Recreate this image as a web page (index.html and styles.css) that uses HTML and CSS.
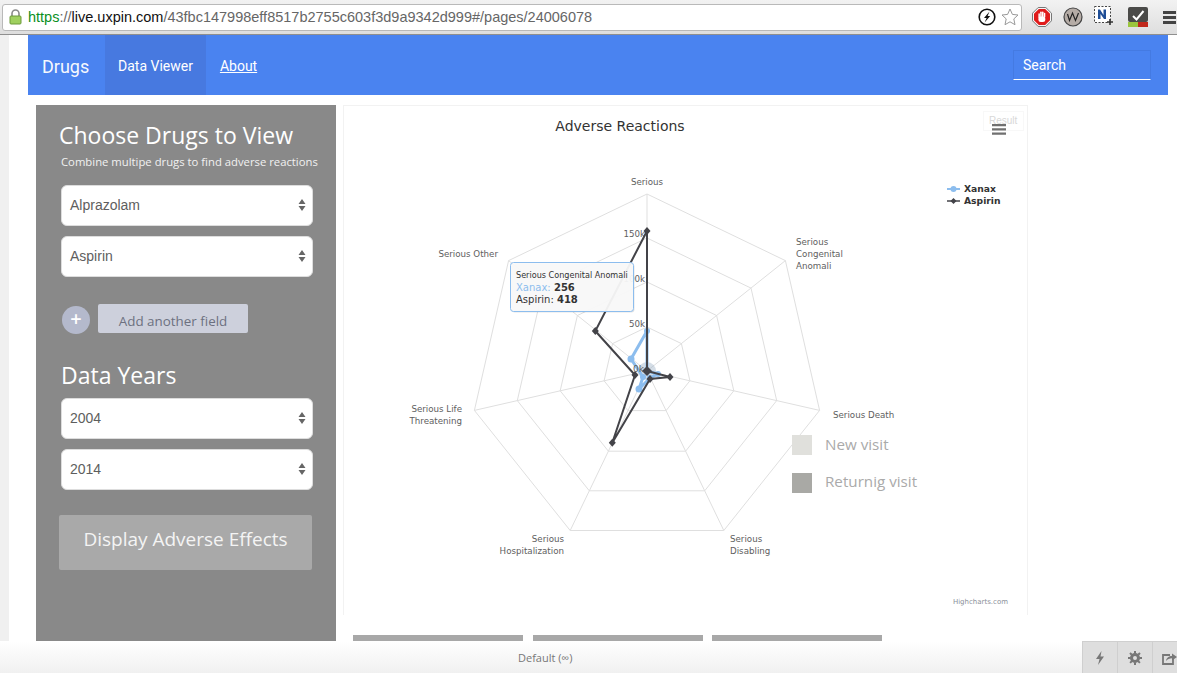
FILE: index.html
```html
<!DOCTYPE html>
<html lang="en">
<head>
    <meta charset="UTF-8">
    <meta name="viewport" content="width=device-width, initial-scale=1.0">
    <title>Drugs</title>
    <link rel="stylesheet" href="styles.css">
</head>
<body>
    <!-- browser toolbar -->
    <div class="toolbar">
        <div class="address">
            <svg class="lock" width="13" height="16" viewBox="0 0 13 16">
                <path d="M3 7V4.500a3.500 3.500 0 0 1 7 0V7" fill="none" stroke="#8a8a8a" stroke-width="1.600"/>
                <rect x="1" y="7" width="11" height="8" rx="1" fill="#9fd05f" stroke="#6c9a3a"/>
            </svg>
            <span class="url"><span class="green">https</span>://<span class="host">live.uxpin.com</span>/43fbc147998eff8517b2755c603f3d9a9342d999#/pages/24006078</span>
            <svg class="addr-icon" width="18" height="18" viewBox="0 0 18 18">
                <circle cx="9" cy="9" r="7.800" fill="#fff" stroke="#111" stroke-width="1.600"/>
                <path d="M11.500 3.500 6 10h2.600l-2 4.600L12.200 8H9.600z" fill="#111"/>
            </svg>
            <svg class="addr-icon" width="18" height="18" viewBox="0 0 18 18">
                <path d="M9 1l2.400 5.400 5.600.6-4.200 3.900 1.200 5.800L9 13.800l-5 2.900 1.200-5.800L1 7l5.600-.6z" fill="#fff" stroke="#999"/>
            </svg>
        </div>
        <div class="extensions">
            <svg width="20" height="20" viewBox="0 0 20 20">
                <path d="M6.200.5h7.600l5.700 5.700v7.600l-5.700 5.700H6.200L.5 13.800V6.200z" fill="#f4f4f4" stroke="#777"/>
                <path d="M6.800 2h6.400L18 6.800v6.400L13.200 18H6.800L2 13.200V6.800z" fill="#e01b1b"/>
                <g fill="#fff">
                    <rect x="6.400" y="6.200" width="1.500" height="5" rx=".7"/>
                    <rect x="8.200" y="4.600" width="1.500" height="6" rx=".7"/>
                    <rect x="10" y="4.600" width="1.500" height="6" rx=".7"/>
                    <rect x="11.800" y="5.800" width="1.500" height="5" rx=".7"/>
                    <rect x="6.400" y="9.500" width="6.900" height="5.500" rx="2.500"/>
                </g>
            </svg>
            <svg width="20" height="20" viewBox="0 0 20 20">
                <circle cx="10" cy="10" r="9" fill="#b5aca6" stroke="#444" stroke-width="1.200"/>
                <path d="M4.500 7l2 6.500 3-7.500 3 7.500 3-7.500" fill="none" stroke="#222" stroke-width="1.200"/>
            </svg>
            <svg width="20" height="22" viewBox="0 0 20 22">
                <rect x=".5" y=".5" width="16" height="16" fill="#fff" stroke="#444" stroke-dasharray="2 1.500"/>
                <path d="M4 13V3.500h2l3.500 5.500V3.500h2.500V13h-2L6.500 8v5z" fill="#1f4e96"/>
                <path d="M16 13v6M13 16h6" stroke="#333" stroke-width="1.600"/>
            </svg>
            <svg class="ext-check" width="20" height="20" viewBox="0 0 20 20">
                <rect width="20" height="15" rx="2" fill="#4a4a48"/>
                <rect y="15" width="10" height="5" fill="#9bc53d"/>
                <rect x="10" y="15" width="10" height="5" fill="#c0281c"/>
                <path d="M5 9l3.500 3.500L15.500 4" fill="none" stroke="#fff" stroke-width="2"/>
            </svg>
            <div class="menu-lines"><i></i><i></i><i></i></div>
        </div>
    </div>

    <div class="page">
        <div class="navbar">
            <a class="brand">Drugs</a>
            <a class="tab active">Data Viewer</a>
            <a class="tab link">About</a>
            <div class="search">Search</div>
        </div>

        <div class="main">
            <div class="sidebar">
                <h1>Choose Drugs to View</h1>
                <p class="hint">Combine multipe drugs to find adverse reactions</p>
                <div class="select"><span>Alprazolam</span><svg class="arrows" width="8" height="14" viewBox="0 0 8 14"><path d="M4 1l3.500 5H.5zM4 13l3.500-5H.5z"/></svg></div>
                <div class="select"><span>Aspirin</span><svg class="arrows" width="8" height="14" viewBox="0 0 8 14"><path d="M4 1l3.500 5H.5zM4 13l3.500-5H.5z"/></svg></div>
                <div class="add-row">
                    <div class="add-circle">+</div>
                    <div class="add-btn">Add another field</div>
                </div>
                <h2>Data Years</h2>
                <div class="select"><span>2004</span><svg class="arrows" width="8" height="14" viewBox="0 0 8 14"><path d="M4 1l3.500 5H.5zM4 13l3.500-5H.5z"/></svg></div>
                <div class="select"><span>2014</span><svg class="arrows" width="8" height="14" viewBox="0 0 8 14"><path d="M4 1l3.500 5H.5zM4 13l3.500-5H.5z"/></svg></div>
                <div class="display-btn">Display Adverse Effects</div>
            </div>

            <div class="chart-col">
                <div class="chart">
                    <svg width="685" height="510" viewBox="343 105 685 510">
                        <!-- rings -->
                        <g fill="none" stroke="#dfdfdf" stroke-width="1">
                            <polygon points="647,194 785.400,260.600 819.600,410.400 723.800,530.500 570.200,530.500 474.400,410.400 508.600,260.600"/>
                            <polygon points="647,238 751,288.100 776.700,400.600 704.700,490.800 589.300,490.800 517.300,400.600 543,288.100"/>
                            <polygon points="647,282 716.600,315.500 733.800,390.800 685.600,451.200 608.400,451.200 560.200,390.800 577.400,315.500"/>
                            <polygon points="647,327 681.400,343.600 689.900,380.800 666.100,410.600 627.900,410.600 604.100,380.800 612.600,343.600"/>
                            <path d="M647 371V194M647 371L785.400 260.600M647 371L819.600 410.400M647 371L723.800 530.500M647 371L570.200 530.500M647 371L474.400 410.400M647 371L508.600 260.600"/>
                        </g>

                        <text class="title" x="620" y="131" text-anchor="middle">Adverse Reactions</text>

                        <g class="axis">
                            <text x="647" y="185" text-anchor="middle">Serious</text>
                            <text x="796" y="245">Serious</text>
                            <text x="796" y="257">Congenital</text>
                            <text x="796" y="269">Anomali</text>
                            <text x="833" y="418">Serious Death</text>
                            <text x="730" y="542">Serious</text>
                            <text x="730" y="554">Disabling</text>
                            <text x="564" y="542" text-anchor="end">Serious</text>
                            <text x="564" y="554" text-anchor="end">Hospitalization</text>
                            <text x="462" y="412" text-anchor="end">Serious Life</text>
                            <text x="462" y="424" text-anchor="end">Threatening</text>
                            <text x="498" y="257" text-anchor="end">Serious Other</text>
                        </g>
                        <g class="axis" text-anchor="end">
                            <text x="645" y="237">150k</text>
                            <text x="645" y="282">100k</text>
                            <text x="645" y="327">50k</text>
                        </g>

                        <!-- Xanax -->
                        <circle cx="647" cy="371" r="9" fill="#9fb4c8" opacity=".45"/>
                        <polyline points="647,331 647,371 658,374 650,378 639,389 643,377 631,359 647,331" fill="none" stroke="#8cbdee" stroke-width="3" stroke-linejoin="round"/>
                        <g fill="#8cbdee">
                            <circle cx="647" cy="331" r="3"/>
                            <circle cx="658" cy="374" r="3"/>
                            <circle cx="650" cy="378" r="3"/>
                            <circle cx="639" cy="389" r="3.500"/>
                            <circle cx="643" cy="377" r="3"/>
                            <circle cx="631" cy="359" r="3.500"/>
                        </g>

                        <!-- Aspirin -->
                        <polyline points="647,231 647,371 670,377 650,379 612.300,442.700 635,375 595.300,331 647,231" fill="none" stroke="#434348" stroke-width="2"/>
                        <g fill="#434348">
                            <path d="M647 227l3.500 4-3.500 4-3.500-4z"/>
                            <path d="M647 366l5 5-5 5-5-5z"/>
                            <path d="M670 373l3.500 4-3.500 4-3.500-4z"/>
                            <path d="M650 375l3.500 4-3.500 4-3.500-4z"/>
                            <path d="M612.300 438.700l3.500 4-3.500 4-3.500-4z"/>
                            <path d="M635 371l3.500 4-3.500 4-3.500-4z"/>
                            <path d="M595.300 327l3.500 4-3.500 4-3.500-4z"/>
                        </g>
                        <text class="axis-zero" x="644" y="372" text-anchor="end">0k</text>

                        <!-- legend -->
                        <path d="M947 189h13" stroke="#8cbdee" stroke-width="2"/>
                        <circle cx="953.500" cy="189" r="3" fill="#8cbdee"/>
                        <path d="M947 201h13" stroke="#434348" stroke-width="1.500"/>
                        <path d="M953.500 198l3 3-3 3-3-3z" fill="#434348"/>
                        <text class="legend" x="964" y="192">Xanax</text>
                        <text class="legend" x="964" y="204">Aspirin</text>

                        <!-- export menu -->
                        <rect x="983.500" y="111.500" width="40" height="19" fill="none" stroke="#f8f8f8"/>
                        <text class="result" x="989" y="124">Result</text>
                        <path d="M992 125.200h14M992 129.300h14M992 133.600h14" stroke="#707070" stroke-width="2.300"/>

                        <!-- visit key -->
                        <rect x="792" y="435" width="20" height="20" fill="#e0e0dc"/>
                        <text class="visit" x="825" y="450">New visit</text>
                        <rect x="792" y="473" width="20" height="20" fill="#a9a9a5"/>
                        <text class="visit" x="825" y="487">Returnig visit</text>

                        <text class="credit" x="1008" y="604" text-anchor="end">Highcharts.com</text>

                        <!-- tooltip -->
                        <rect x="511.500" y="263.500" width="123" height="49" rx="3" fill="#000" opacity=".1"/>
                        <rect x="510.500" y="262.500" width="123" height="49" rx="3" fill="#f9f9f9" fill-opacity=".95" stroke="#8cbdee"/>
                        <text class="tip-head" x="516" y="278">Serious Congenital Anomali</text>
                        <text class="tip" x="516" y="291"><tspan fill="#8cbdee">Xanax:</tspan> <tspan class="tip-num">256</tspan></text>
                        <text class="tip" x="516" y="303">Aspirin: <tspan class="tip-num">418</tspan></text>
                    </svg>
                </div>
                <div class="bars">
                    <div class="bar"></div>
                    <div class="bar"></div>
                    <div class="bar"></div>
                </div>
            </div>
        </div>
    </div>

    <div class="footer">
        <div class="footer-label">Default (∞)</div>
        <div class="footer-btns">
            <div class="footer-btn">
                <svg width="12" height="16" viewBox="0 0 12 16"><path d="M7.500 1L2 9h3.500l-1.500 6 6-8.500H6.500z" fill="#777"/></svg>
            </div>
            <div class="footer-btn">
                <svg width="14" height="14" viewBox="0 0 14 14"><circle cx="7" cy="7" r="3.500" fill="none" stroke="#777" stroke-width="3"/><path d="M7 0v14M0 7h14M2 2l10 10M12 2L2 12" stroke="#777" stroke-width="2" stroke-dasharray="2.500 9 2.500"/></svg>
            </div>
            <div class="footer-btn share">
                <svg width="15" height="14" viewBox="0 0 15 14"><path d="M8 4H1v9h10V8" fill="none" stroke="#777" stroke-width="1.800"/><path d="M4 10c.5-3.500 3-5 6-5V2.500L15 6l-5 3.500V7.300C7.500 7.300 5.500 8.200 4 10z" fill="#777"/></svg>
            </div>
        </div>
    </div>
</body>
</html>
```

FILE: styles.css
```css
html,body{
    margin: 0;
    padding: 0;
    height: 673px;
    overflow: hidden;
    background-color: #fff;
}
body{
    display: flex;
    flex-direction: column;
    font-family: Roboto,"Liberation Sans",sans-serif;
}

/* browser toolbar */
.toolbar{
    height: 35px;
    flex-shrink: 0;
    box-sizing: border-box;
    display: flex;
    align-items: center;
    padding: 0 1px 0 2px;
    background: linear-gradient(#f2f2f2,#dedede);
    border-bottom: 1px solid #8f8f8f;
}
.address{
    width: 1020px;
    height: 27px;
    box-sizing: border-box;
    display: flex;
    align-items: center;
    background-color: #fff;
    border: 1px solid #b9b9b9;
    border-radius: 3px;
    padding-left: 6px;
    padding-right: 2px;
    gap: 5px;
}
.lock{
    margin-right: 1px;
}
.url{
    flex: 1;
    font-family: "Liberation Sans",Arial,sans-serif;
    font-size: 14.500px;
    color: #666;
    white-space: nowrap;
}
.green{
    color: #0a8f1e;
}
.host{
    color: #111;
}
.extensions{
    flex: 1;
    display: flex;
    align-items: center;
    gap: 11px;
    padding-left: 10px;
}
.ext-check{
    margin-left: 3px;
}
.menu-lines{
    margin-left: auto;
}
.menu-lines i{
    display: block;
    width: 13px;
    height: 3px;
    margin: 2px 0;
    background-color: #444;
}

/* page */
.page{
    height: 606px;
    flex-shrink: 0;
    box-sizing: border-box;
    border-left: 9px solid #f0f0f0;
    padding-left: 19px;
    overflow: hidden;
}
.navbar{
    width: 1140px;
    height: 60px;
    display: flex;
    align-items: stretch;
    background-color: #4a83f0;
    color: #fff;
}
.brand{
    width: 77px;
    padding-left: 14px;
    box-sizing: border-box;
    font-size: 18px;
    line-height: 64px;
    opacity: .95;
}
.tab{
    font-size: 14px;
    line-height: 62px;
    padding: 0 13px;
}
.active{
    background-color: #4779e0;
}
.link{
    margin-left: 1px;
    text-decoration: underline;
}
.search{
    margin: 15px 17px 15px auto;
    width: 138px;
    height: 30px;
    box-sizing: border-box;
    padding-left: 9px;
    font-size: 14px;
    line-height: 29px;
    border: 1px solid #447ae2;
    border-bottom: 1px solid #fff;
}
.main{
    display: flex;
    gap: 7px;
    margin-left: 8px;
    padding-top: 10px;
}

/* left panel */
.sidebar{
    width: 300px;
    height: 536px;
    box-sizing: border-box;
    padding: 15px 23px 0 25px;
    background-color: #898989;
    color: #fff;
    font-family: "Open Sans",sans-serif;
}
h1,h2{
    margin: 0 0 2px;
    font-weight: 400;
    font-size: 23px;
    line-height: 30px;
}
h1{
    margin-left: -2px;
}
.hint{
    margin: 0 0 13px;
    font-size: 11.300px;
    line-height: 20px;
    white-space: nowrap;
    color: #f1f1f1;
}
.select{
    height: 41px;
    box-sizing: border-box;
    margin-bottom: 10px;
    padding: 0 6px 2px 8px;
    display: flex;
    align-items: center;
    justify-content: space-between;
    background-color: #fff;
    border: 1px solid #ddd;
    border-radius: 6px;
    font-family: "Liberation Sans",Arial,sans-serif;
    font-size: 14px;
    color: #5e5e5e;
}
.arrows{
    fill: #666;
}
.add-row{
    display: flex;
    align-items: flex-start;
    gap: 8px;
    height: 30px;
    margin: 27px 0 26px 1px;
}
.add-circle{
    width: 28px;
    height: 28px;
    margin-top: 2px;
    border-radius: 50%;
    background-color: #b4b9cc;
    text-align: center;
    font-size: 20px;
    line-height: 26px;
    font-weight: 600;
}
.add-btn{
    width: 150px;
    height: 29px;
    background-color: #cdd0dc;
    border-radius: 2px;
    color: #6c7080;
    text-align: center;
    font-size: 13.400px;
    line-height: 34px;
}
h2{
    margin-bottom: 8px;
}
.display-btn{
    width: 253px;
    height: 55px;
    margin: 25px 0 0 -2px;
    background-color: #a9a9a9;
    border-radius: 2px;
    text-align: center;
    font-size: 19px;
    line-height: 48px;
    color: #f4f4f4;
    white-space: nowrap;
}

/* chart */
.chart{
    width: 685px;
    height: 510px;
    box-sizing: border-box;
    box-shadow: inset 1px 1px 0 #f2f2f2,inset -1px 0 0 #f2f2f2;
}
.chart svg{
    display: block;
    font-family: "DejaVu Sans",sans-serif;
}
.title{
    font-size: 14px;
    fill: #333;
}
.axis text,.axis-zero{
    font-size: 8.700px;
    fill: #606060;
}
.axis-zero{
    font-size: 9px;
}
.legend{
    font-size: 9.200px;
    font-weight: 700;
    fill: #333;
}
.result{
    font-size: 10px;
    fill: #d8d8d8;
    font-family: "Liberation Sans",sans-serif;
}
.visit{
    font-family: "Open Sans",sans-serif;
    font-size: 15.200px;
    fill: #aaa;
}
.credit{
    font-size: 7px;
    fill: #8a8f99;
}
.tip-head{
    font-size: 8.100px;
    fill: #333;
}
.tip{
    font-size: 10px;
    fill: #333;
}
.tip-num{
    font-weight: 700;
}
.bars{
    display: flex;
    gap: 10px;
    margin: 20px 0 0 10px;
}
.bar{
    width: 170px;
    height: 6px;
    background-color: #a8a8a8;
}
.bar:last-child{
    margin-left: -1px;
}

/* bottom strip */
.footer{
    flex: 1;
    display: flex;
    justify-content: space-between;
    background: linear-gradient(#fff,#f0f0f0);
}
.footer-label{
    margin-left: 518px;
    font-family: "Open Sans",sans-serif;
    font-size: 11px;
    line-height: 33px;
    color: #777;
}
.footer-btns{
    display: flex;
}
.footer-btn{
    width: 35px;
    display: flex;
    align-items: center;
    justify-content: center;
    background-color: #dedede;
    border-left: 1px solid #cfcfcf;
    border-top: 1px solid #cfcfcf;
    box-sizing: border-box;
}
.share{
    width: 25px;
    justify-content: flex-start;
    padding-left: 9px;
}
```
